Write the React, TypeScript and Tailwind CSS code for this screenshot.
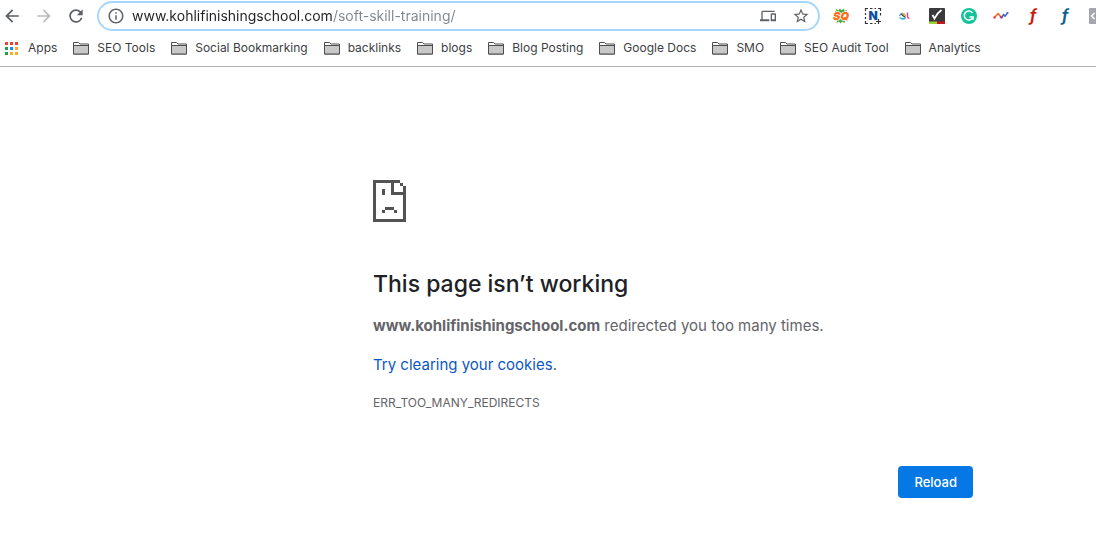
import { useState } from 'react';
import type { ReactNode } from 'react';
import { MdArrowBack, MdArrowForward, MdRefresh, MdInfoOutline, MdDevices, MdStarBorder } from 'react-icons/md';

const bookmarks = [
  'SEO Tools',
  'Social Bookmarking',
  'backlinks',
  'blogs',
  'Blog Posting',
  'Google Docs',
  'SMO',
  'SEO Audit Tool',
  'Analytics',
];

const appColors = [
  '#ea4335', '#ea4335', '#ea4335',
  '#1e9e55', '#1a8cf0', '#fbab2a',
  '#1e9e55', '#fbab2a', '#fbab2a',
];

const extensions: { name: string; icon: ReactNode }[] = [
  {
    name: 'SEOquake',
    icon: (
      <>
        <path d="M3 1l2.500 1.500L7 .5 8.500 2.500 11 .5l.5 2.500L14 2l-1 3H4L1.500 3.500 3.500 3zM3 11h10l1.500 2-2.500-.5-.5 2.500L9 13.500 7.500 15.500 6 13.500 3.500 15l.5-2.500-2.500.5z" fill="#4aa53c" />
        <text x="8" y="12" textAnchor="middle" className="text-[11px] font-black italic" fill="#ff6a13" stroke="#fff" strokeWidth="1.500" paintOrder="stroke">
          SQ
        </text>
      </>
    ),
  },
  {
    name: 'Nimbus',
    icon: (
      <>
        <path
          d="M0.500 3V0.500H3M5 0.500h2.500M9.500 0.500H11M13 0.500h2.500V3M15.500 5v2.500M0.500 5v2M0.500 9v2M0.500 13v2.500H3M5 15.500h2.500M9.500 15.500H11M11 13.500h5M13.500 11v5"
          fill="none"
          stroke="#333"
          strokeWidth="1.200"
        />
        <text x="8" y="12" textAnchor="middle" className="text-[12px] font-black" fill="#0d4f9c">
          N
        </text>
      </>
    ),
  },
  {
    name: 'Similar sites',
    icon: (
      <>
        <path d="M2.500 8c1-3 3.500-3.500 5.500-1" fill="none" stroke="#35b3d8" strokeWidth="1.300" />
        <path d="M4 6l4.500 3.500" fill="none" stroke="#4a4a4a" strokeWidth="1.500" />
        <path d="M5.500 5l3.500 3" fill="none" stroke="#f9a832" strokeWidth="1.300" />
        <path d="M2.500 9.500C4.500 11.200 7 11 8.500 9.800" fill="none" stroke="#35b3d8" strokeWidth="1.500" />
        <path d="M10.500 4.500v3.500c0 1.500.6 2.200 1.800 2.200" fill="none" stroke="#ec3c96" strokeWidth="1.400" />
      </>
    ),
  },
  {
    name: 'Checker',
    icon: (
      <>
        <rect width="16" height="16" rx="1" fill="#3a3a3c" />
        <path d="M0 13.500h8V16H0z" fill="#9bd232" />
        <path d="M8 13.500h8V16H8z" fill="#c4161c" />
        <path d="M3.500 7l2 3.500C7 7 9 4.500 12.500 2" fill="none" stroke="#fff" strokeWidth="1.800" />
      </>
    ),
  },
  {
    name: 'Grammarly',
    icon: (
      <>
        <circle cx="8" cy="8" r="8" fill="#15c39a" />
        <path d="M11.500 5A4.500 4.500 0 1 0 12 9H8.500M12 8.500V12" fill="none" stroke="#fff" strokeWidth="1.500" />
      </>
    ),
  },
  {
    name: 'Trends',
    icon: (
      <>
        <path d="M1.500 9.500L5 5.500l3.500 4" fill="none" stroke="#f26a2e" strokeWidth="1.600" strokeLinejoin="round" />
        <path d="M7 8.500L8.500 10 11 6" fill="none" stroke="#8a3fa0" strokeWidth="1.600" strokeLinejoin="round" />
        <path d="M10.500 6.500l1.500 1.800L14.500 5" fill="none" stroke="#3c6fd0" strokeWidth="1.500" strokeLinejoin="round" />
        <circle cx="1.500" cy="9.500" r="1.200" fill="#ea4335" />
        <circle cx="14.500" cy="5" r="1.100" fill="#3c6fd0" />
      </>
    ),
  },
  {
    name: 'Font finder red',
    icon: (
      <text x="8" y="13" textAnchor="middle" className="text-[16px] font-bold italic" fill="#c81e12">
        f
      </text>
    ),
  },
  {
    name: 'Font finder blue',
    icon: (
      <text x="8" y="13" textAnchor="middle" className="text-[16px] font-bold italic" fill="#0b6390">
        f
      </text>
    ),
  },
];

const FolderIcon = () => (
  <svg width="16" height="14" viewBox="0 0 16 14" className="shrink-0">
    <path d="M.5 13V1.500h5L7 3h8.500v10z" fill="#fff" stroke="#4d4d4d" />
    <path d="M.5 4.500h15V13H.5z" fill="#c8c8c8" stroke="#4d4d4d" />
  </svg>
);

const Toolbar = () => {
  const [url, setUrl] = useState('www.kohlifinishingschool.com/soft-skill-training/');

  return (
    <div className="flex h-8 items-center">
      <div className="flex shrink-0 items-center gap-3 pl-[2px] pr-[11px] text-[#5a5d61]">
        <button type="button" aria-label="Back">
          <MdArrowBack size={20} />
        </button>
        <button type="button" aria-label="Forward" className="text-[#babcbe]" disabled>
          <MdArrowForward size={20} />
        </button>
        <button type="button" aria-label="Reload page">
          <MdRefresh size={20} />
        </button>
      </div>
      <div className="flex h-[30px] min-w-0 flex-1 items-center rounded-full border-2 border-[#a8d7fb] px-2 text-[#5f6368]">
        <MdInfoOutline size={18} className="shrink-0" />
        {/* host is dark, the path after it is grey */}
        <input
          type="text"
          aria-label="Address"
          value={url}
          onChange={(e) => setUrl(e.target.value)}
          className="ml-[7px] min-w-0 flex-1 bg-[linear-gradient(90deg,#202124_200px,#80868b_200px)] bg-clip-text text-sm text-transparent caret-black outline-none"
        />
        <button type="button" aria-label="Send to your devices">
          <MdDevices size={16} />
        </button>
        <button type="button" aria-label="Bookmark this page" className="ml-4">
          <MdStarBorder size={18} />
        </button>
      </div>
      <div className="ml-[13px] flex shrink-0 items-center gap-4">
        {extensions.map((ext) => (
          <button type="button" key={ext.name} aria-label={ext.name}>
            <svg width="16" height="16" viewBox="0 0 16 16" className="overflow-visible">
              {ext.icon}
            </svg>
          </button>
        ))}
        <button type="button" aria-label="View source">
          <svg width="7" height="16" viewBox="0 0 7 16">
            <path d="M1 0h6v16H1a1 1 0 0 1-1-1V1a1 1 0 0 1 1-1z" fill="#a3a6b1" />
            <path d="M5.500 5l-3 3 3 3" fill="none" stroke="#fff" strokeWidth="1.500" />
          </svg>
        </button>
      </div>
    </div>
  );
};

const BookmarksBar = () => (
  <nav className="flex h-[35px] items-center gap-4 overflow-hidden border-b border-[#b1b1b1] pb-[2px] pl-[5px] text-xs whitespace-nowrap text-[#3c4043]">
    <a href="#apps" className="flex items-center gap-[10px]">
      <svg width="13" height="13" viewBox="0 0 13 13" className="shrink-0">
        {appColors.map((color, i) => (
          <rect key={i} x={(i % 3) * 5} y={Math.floor(i / 3) * 5} width="3" height="3" fill={color} />
        ))}
      </svg>
      Apps
    </a>
    {bookmarks.map((name) => (
      <a href="#bookmark" key={name} className="flex items-center gap-2">
        <FolderIcon />
        {name}
      </a>
    ))}
  </nav>
);

const App = () => {
  return (
    <div className="min-h-screen bg-white font-['Inter','Liberation_Sans',sans-serif]">
      <header>
        <Toolbar />
        <BookmarksBar />
      </header>
      <main className="ml-[373px] mr-4 max-w-[600px] pt-[113px] text-[15px] leading-6 text-[#646469]">
        <svg width="33" height="42" viewBox="0 0 11 14" shapeRendering="crispEdges" fill="#535353">
          <path d="M0 0h9v1H7v3h4v1H6V1H1v12h9V5h1v9H0z" />
          <path d="M9 1h1v1H9zM10 2h1v3h-1zM3 3h1v2H3zM4 9h3v1H4zM3 10h1v1H3zM7 10h1v1H7z" />
        </svg>
        <h1 className="mt-[46px] text-[23px] leading-8 font-medium text-[#202124]">This page isn’t working</h1>
        <p className="mt-[14px]">
          <strong className="font-bold">www.kohlifinishingschool.com</strong> redirected you too many times.
        </p>
        <p className="mt-[15px]">
          <a href="#cookies" className="text-[#0b57c2]">Try clearing your cookies</a>.
        </p>
        <p className="mt-4 text-xs leading-5">ERR_TOO_MANY_REDIRECTS</p>
        <div className="mt-[53px] flex justify-end">
          <button type="button" className="h-8 rounded bg-[#0578e6] px-4 text-[13px] font-medium text-white">
            Reload
          </button>
        </div>
      </main>
    </div>
  );
};

export default App;
